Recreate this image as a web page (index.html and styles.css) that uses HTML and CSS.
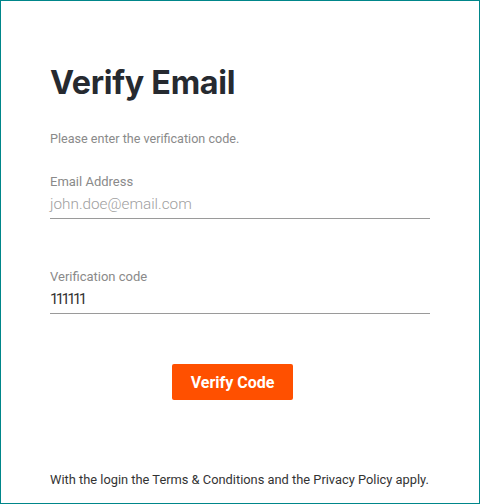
FILE: index.html
```html
<!DOCTYPE html>
<html>
<head>
<meta charset="utf-8">
<link rel="stylesheet" href="styles.css">
</head>
<body>
<div class="frame">
  <h1 class="title">Verify Email</h1>
  <p class="subtitle">Please enter the verification code.</p>
  <div class="field">
    <label class="label">Email Address</label>
    <div class="value placeholder">john.doe@email.com</div>
  </div>
  <div class="field field-second">
    <label class="label">Verification code</label>
    <div class="value code">111111</div>
  </div>
  <div class="actions">
    <button class="btn">Verify Code</button>
  </div>
  <p class="footer">With the login the Terms &amp; Conditions and the Privacy Policy apply.</p>
</div>
</body>
</html>
```
FILE: styles.css
```css
html, body {
  margin: 0;
  padding: 0;
  background: #fff;
}
.frame {
  box-sizing: border-box;
  width: 480px;
  height: 504px;
  border: 1px solid #00868a;
  padding: 0 49px 0 49px;
  font-family: Roboto, "Liberation Sans", sans-serif;
  display: flex;
  flex-direction: column;
}
.title {
  font-family: Inter, "Liberation Sans", sans-serif;
  font-weight: 700;
  font-size: 32.3px;
  line-height: 40px;
  color: #262a30;
  margin: 62px 0 0 0;
  letter-spacing: -0.3px;
}
.subtitle {
  font-size: 12.6px;
  line-height: 16px;
  color: #8a8a8a;
  margin: 28px 0 0 0;
}
.field {
  margin-top: 27px;
  border-bottom: 1px solid #9a9a9a;
  padding-bottom: 4px;
  width: 380px;
}
.field-second {
  margin-top: 50px;
}
.label {
  display: block;
  font-size: 13px;
  line-height: 16px;
  color: #8a8a8a;
}
.value {
  font-size: 15px;
  line-height: 20px;
  margin-top: 4px;
  color: #333;
}
.value.placeholder {
  color: #a0a0a0;
  font-weight: 300;
  font-size: 15.3px;
}
.value.code {
  letter-spacing: -2.7px;
}
.actions {
  margin-top: 50px;
  padding-left: 122px;
}
.btn {
  width: 121px;
  height: 36px;
  border: none;
  border-radius: 2px;
  background: #ff5000;
  color: #fff;
  font-family: Roboto, "Liberation Sans", sans-serif;
  font-weight: 700;
  font-size: 16px;
  padding: 0;
}
.footer {
  margin: auto 0 15px 0;
  font-size: 12.85px;
  line-height: 16px;
  color: #333;
  white-space: nowrap;
}
```
